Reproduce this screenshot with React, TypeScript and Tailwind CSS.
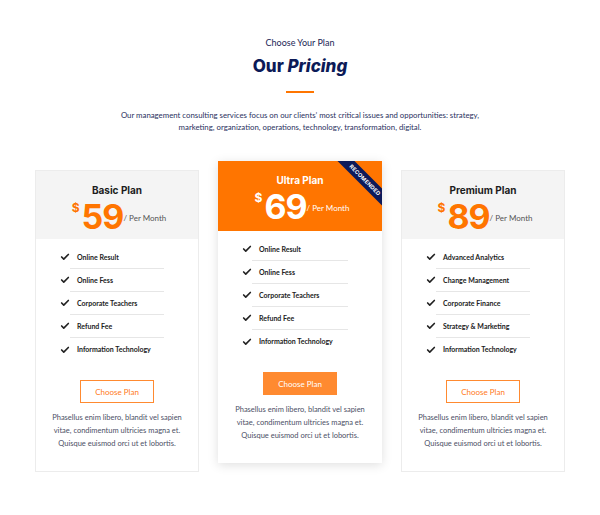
import { Check } from 'lucide-react'

interface Plan {
  name: string
  price: string
  features: string[]
  featured?: boolean
}

const plans: Plan[] = [
  {
    name: 'Basic Plan',
    price: '59',
    features: ['Online Result', 'Online Fess', 'Corporate Teachers', 'Refund Fee', 'Information Technology'],
  },
  {
    name: 'Ultra Plan',
    price: '69',
    featured: true,
    features: ['Online Result', 'Online Fess', 'Corporate Teachers', 'Refund Fee', 'Information Technology'],
  },
  {
    name: 'Premium Plan',
    price: '89',
    features: ['Advanced Analytics', 'Change Management', 'Corporate Finance', 'Strategy & Marketing', 'Information Technology'],
  },
]

const heading = { fontFamily: 'Inter, "Open Sans", sans-serif' }
const body = { fontFamily: 'Lato, "Open Sans", sans-serif' }

function PlanCard({ plan }: { plan: Plan }) {
  const featured = plan.featured
  return (
    <div
      className={`relative w-[164px] overflow-hidden bg-white ${
        featured ? 'shadow-[0_2px_10px_rgba(0,0,0,0.13)]' : 'mt-[9px] border border-[#ececec]'
      }`}
    >
      {featured && (
        <div className="absolute top-[13px] right-[-23px] flex h-[12px] w-[80px] rotate-45 items-center justify-center bg-[#0d1a5a]">
          <span className="text-[5.5px] font-bold uppercase tracking-[0.2px] text-white" style={heading}>
            Recomended
          </span>
        </div>
      )}
      <div
        className={`flex flex-col items-center ${
          featured ? 'h-[70px] bg-[#ff7500] pt-[12px]' : 'h-[68px] bg-[#f4f4f4] pt-[12px]'
        }`}
      >
        <h3
          className={`text-[10px] leading-[14px] font-bold ${featured ? 'text-white' : 'text-[#1c1c1c]'}`}
          style={heading}
        >
          {plan.name}
        </h3>
        <div className="mt-[2px] ml-[4px] flex items-center">
          <span
            className={`self-start mt-[3px] text-[12px] leading-[12px] font-bold ${featured ? 'text-white' : 'text-[#ff7500]'}`}
            style={heading}
          >
            $
          </span>
          <span
            className={`ml-[2px] text-[34px] leading-[36px] font-bold tracking-[-1px] ${featured ? 'text-white' : 'text-[#ff7500]'}`}
            style={heading}
          >
            {plan.price}
          </span>
          <span className={`mt-[2px] text-[8px] ${featured ? 'text-white' : 'text-[#555]'}`} style={body}>
            / Per Month
          </span>
        </div>
      </div>
      <ul className="ml-[34px] mr-[34px] pt-[7px]">
        {plan.features.map((f, i) => (
          <li
            key={f}
            className={`relative flex h-[23px] items-center pl-[7px] text-[7px] font-bold text-[#222] ${
              i < plan.features.length - 1 ? 'border-b border-[#e6e6e6]' : ''
            }`}
            style={body}
          >
            <Check className="absolute left-[-10px] h-[10px] w-[10px] text-[#222]" strokeWidth={4} />
            {f}
          </li>
        ))}
      </ul>
      <div className="flex justify-center pt-[19px]">
        <button
          className={`h-[23px] w-[74px] text-[8px] ${
            featured ? 'bg-[#ff8a30] text-white' : 'border border-[#ff8a30] text-[#ff7a1a]'
          }`}
          style={body}
        >
          Choose Plan
        </button>
      </div>
      <p className="px-[12px] pt-[8px] pb-[21px] text-center text-[7.5px] leading-[13px] text-[#4c5066]" style={body}>
        Phasellus enim libero, blandit vel sapien vitae, condimentum ultricies magna et. Quisque euismod orci ut et
        lobortis.
      </p>
    </div>
  )
}

export default function App() {
  return (
    <div className="min-h-[515px] w-[600px] bg-white">
      <div className="flex flex-col items-center pt-[37px]">
        <p className="text-[9px] leading-[12px] text-[#1b2556]" style={body}>
          Choose Your Plan
        </p>
        <h2 className="mt-[6px] text-[17px] leading-[22px] font-extrabold text-[#0c1a57]" style={heading}>
          Our <span className="italic">Pricing</span>
        </h2>
        <div className="mt-[14px] h-[2px] w-[28px] bg-[#ff7500]" />
        <p className="mt-[16px] w-[372px] text-center text-[7.8px] leading-[12px] text-[#2a3160]" style={body}>
          Our management consulting services focus on our clients’ most critical issues and opportunities: strategy,
          marketing, organization, operations, technology, transformation, digital.
        </p>
      </div>
      <div className="mt-[28px] flex items-start justify-center gap-[19px]">
        {plans.map((p) => (
          <PlanCard key={p.name} plan={p} />
        ))}
      </div>
    </div>
  )
}
